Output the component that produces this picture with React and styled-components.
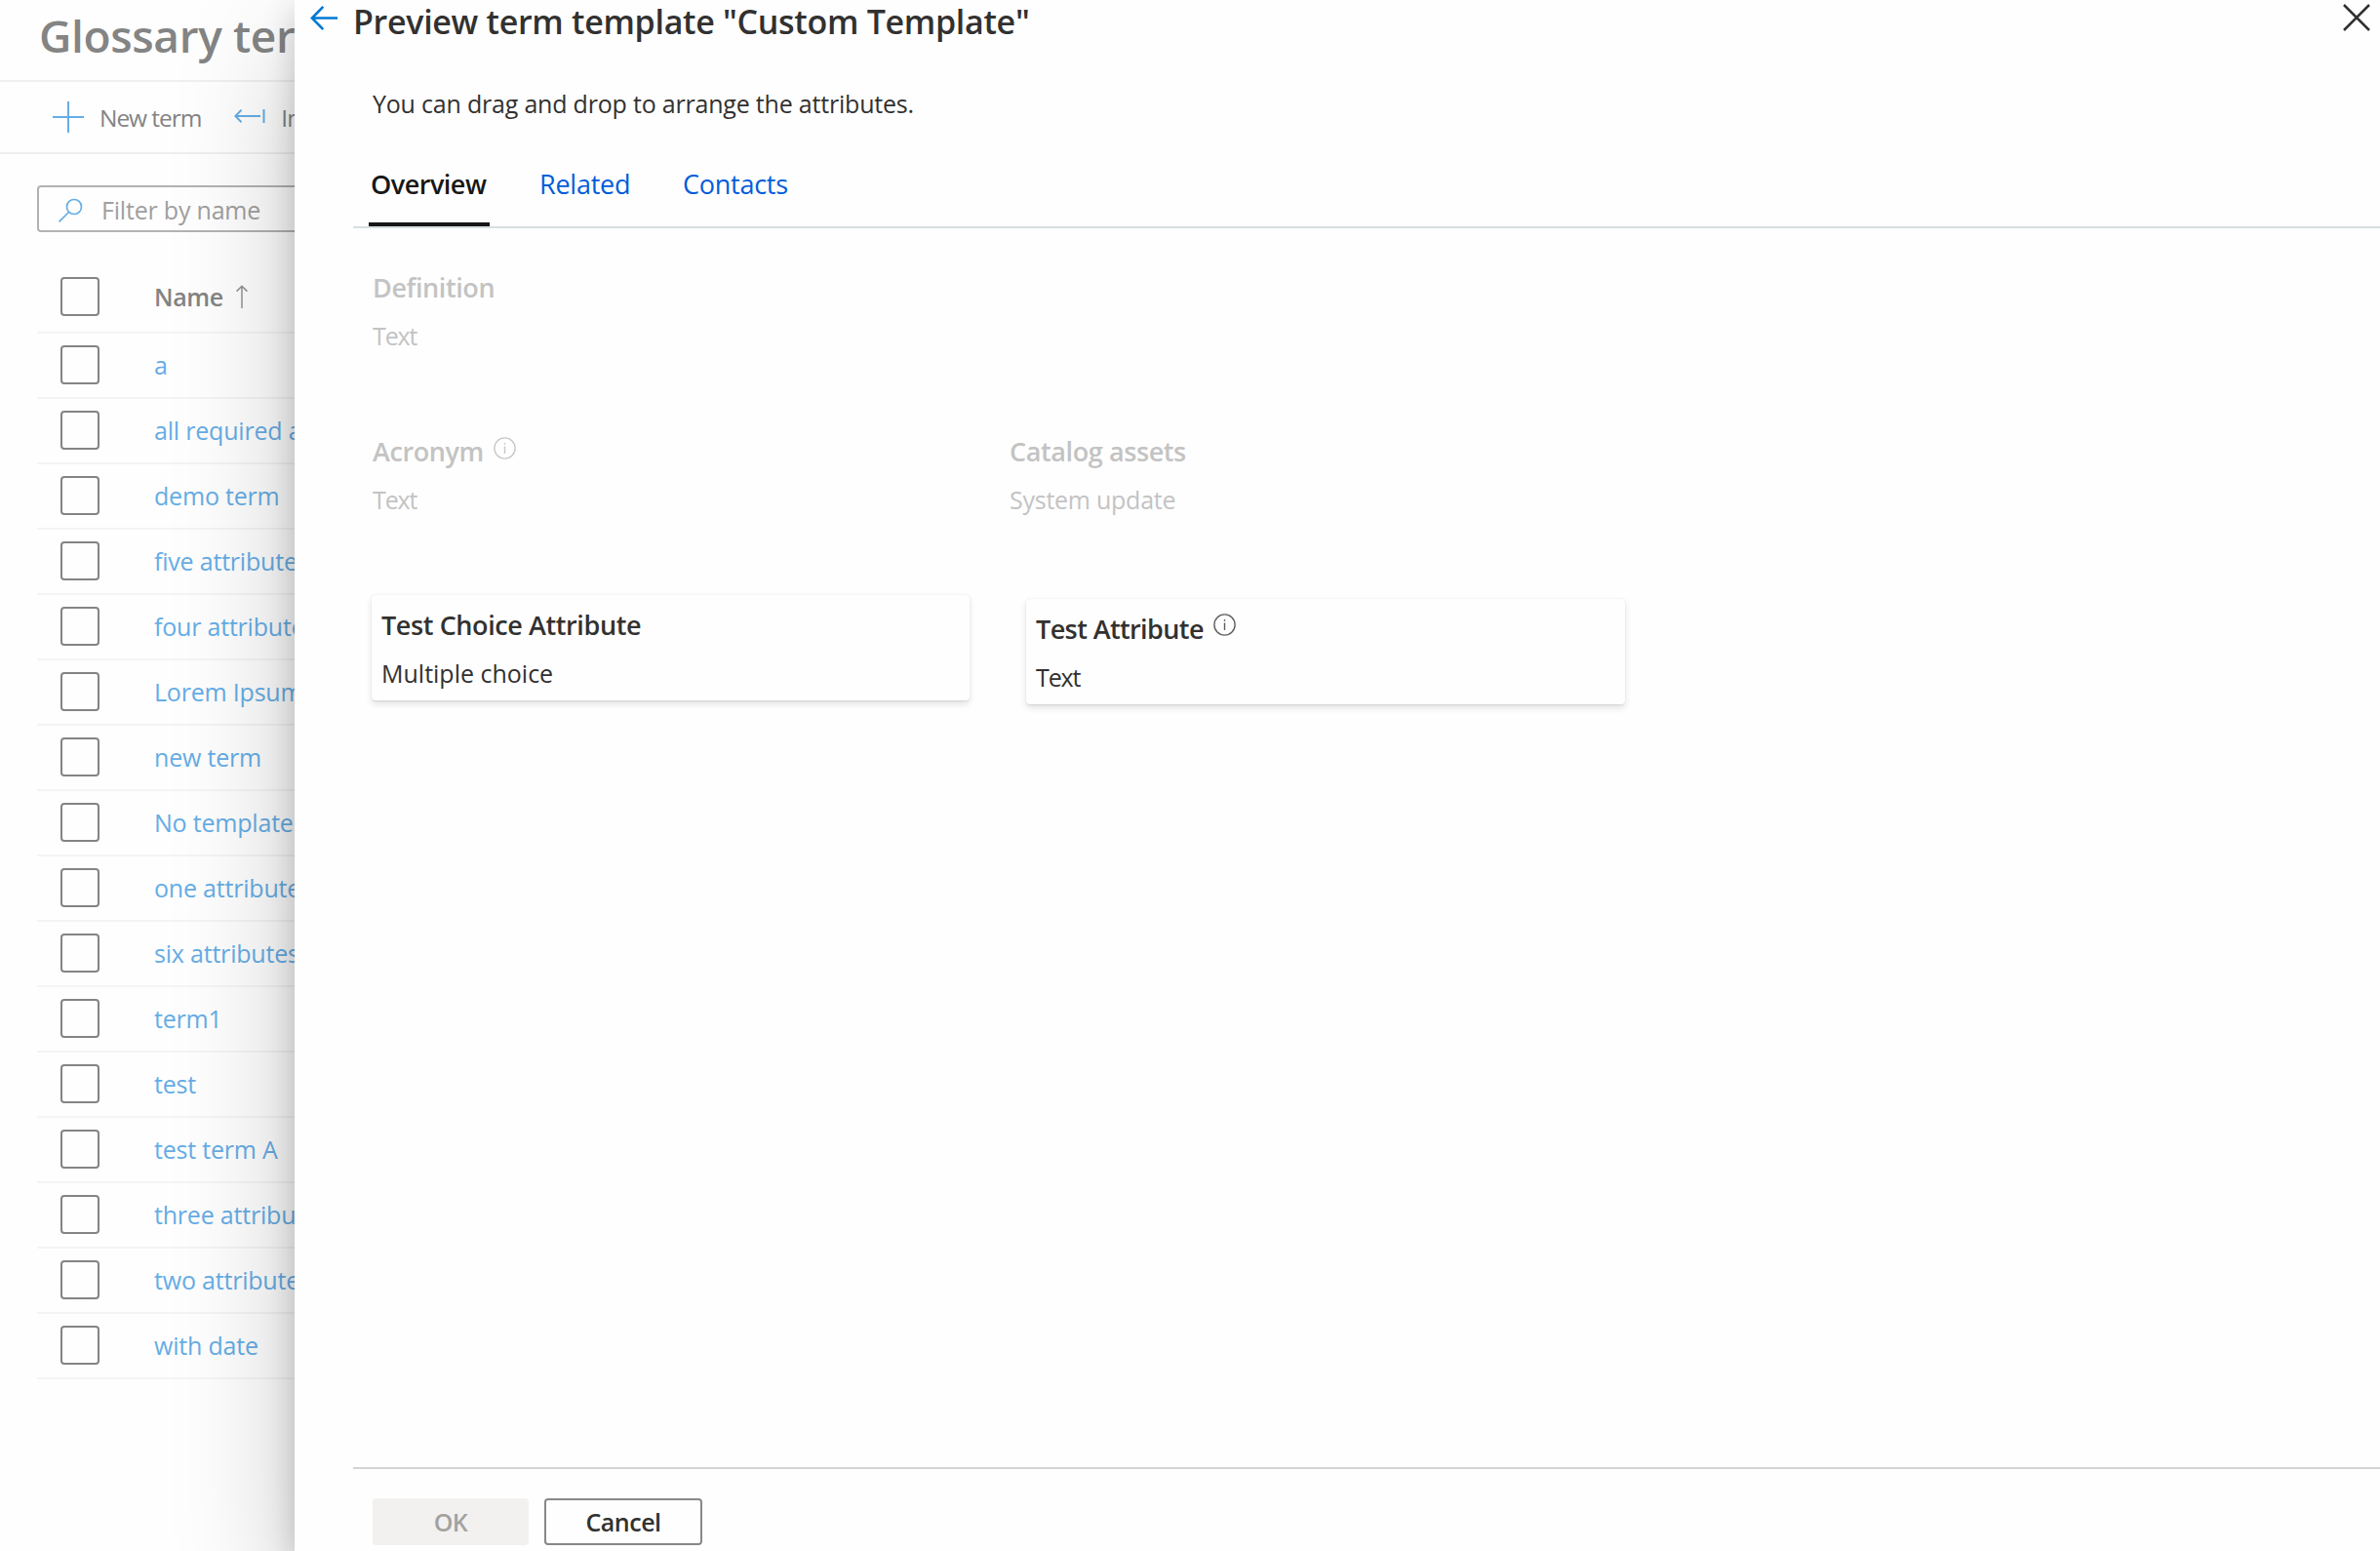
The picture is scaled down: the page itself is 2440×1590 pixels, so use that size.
import React from "react";
import styled, { createGlobalStyle } from "styled-components";

const GlobalStyle = createGlobalStyle`
  * { box-sizing: border-box; }
  html, body { margin: 0; padding: 0; background: #fefefe; overflow: hidden; }
  body { font-family: "Open Sans", "Noto Sans", sans-serif; font-size: 25px; line-height: 34px; color: #323130; }
  svg { display: block; flex: none; }
  button, input { font: inherit; letter-spacing: inherit; }
`;

const Shell = styled.div`
  position: relative;
  width: 2440px;
  height: 1590px;
  overflow: hidden;
  background: #fefefe;
  white-space: nowrap;
`;

/* Glossary page, dimmed behind the panel */
const Page = styled.main`
  display: flex;
  flex-direction: column;
  color: #848484;
`;

const PageHeader = styled.header`
  height: 84px;
  padding: 6px 0 0 40px;
  border-bottom: 2px solid #efefef;
`;

const PageTitle = styled.h1`
  margin: 0;
  font-size: 46px;
  line-height: 60px;
  font-weight: 600;
  letter-spacing: -0.35px;
`;

const Toolbar = styled.div`
  display: flex;
  align-items: center;
  height: 74px;
  padding-left: 54px;
  border-bottom: 2px solid #efefef;
`;

const Command = styled.div`
  display: flex;
  align-items: center;
  gap: 16px;
  margin-right: 34px;
  font-size: 24.5px;
  letter-spacing: -1.05px;
`;

const CommandLabel = styled.span`
  padding-top: 2px;
`;

const FilterBox = styled.div`
  display: flex;
  align-items: center;
  gap: 18px;
  width: 560px;
  height: 48px;
  margin: 32px 0 30px 38px;
  padding: 1px 20px 0;
  border: 2px solid #b2b2b2;
  border-radius: 4px;
  color: #9f9f9f;
  letter-spacing: -0.2px;
`;

const Table = styled.div`
  display: flex;
  flex-direction: column;
  margin-left: 38px;
`;

const Row = styled.div`
  display: flex;
  align-items: center;
  height: ${(p) => (p.$head ? 74 : 67)}px;
  padding: 0 0 ${(p) => (p.$head ? 0 : 1)}px 24px;
  border-bottom: 2px solid #f4f4f4;
`;

const Checkbox = styled.span`
  width: 40px;
  height: 40px;
  margin-right: 56px;
  border: 2px solid #848484;
  border-radius: 4px;
  flex: none;
`;

const ColumnName = styled.span`
  margin-right: 13px;
  font-weight: 600;
  letter-spacing: -0.4px;
`;

const TermLink = styled.a`
  color: #66ade5;
  letter-spacing: -0.2px;
`;

/* Template preview panel, laid over the page */
const Panel = styled.section`
  position: absolute;
  top: 0;
  right: 0;
  bottom: 0;
  left: 302px;
  display: flex;
  flex-direction: column;
  background: #fefefe;
  box-shadow: 0 51.2px 115.2px rgba(0, 0, 0, 0.22), 0 9.6px 28.8px rgba(0, 0, 0, 0.18);
`;

const PanelHeader = styled.header`
  display: flex;
  align-items: flex-start;
  height: 89px;
  padding: 0 10px 0 16px;
`;

const PanelTitle = styled.h2`
  flex: 1;
  margin: 0 0 0 16px;
  font-size: 34px;
  line-height: 44px;
  font-weight: 600;
  letter-spacing: -0.3px;
`;

const IconButton = styled.button`
  display: block;
  margin-top: ${(p) => p.$top}px;
  padding: 0;
  border: 0;
  background: none;
`;

const PanelBody = styled.div`
  display: flex;
  flex-direction: column;
  flex: 1;
  margin-left: 60px;
`;

const Hint = styled.p`
  margin: 0;
  padding-left: 20px;
  letter-spacing: -0.2px;
`;

const TabList = styled.div`
  display: flex;
  height: 111px;
  padding: 48px 0 0 16px;
  border-bottom: 2px solid #d9dde0;
`;

const Tab = styled.div`
  width: ${(p) => p.$width}px;
  height: 61px;
  margin-right: ${(p) => p.$gap || 0}px;
  padding-left: 2px;
  font-size: 27px;
  line-height: 36px;
  font-weight: ${(p) => (p.$active ? 600 : 400)};
  letter-spacing: ${(p) => (p.$active ? "-0.5px" : "-0.25px")};
  color: ${(p) => (p.$active ? "#171717" : "#015cda")};
  border-bottom: 4px solid ${(p) => (p.$active ? "#171717" : "transparent")};
`;

const Attributes = styled.div`
  display: flex;
  flex-direction: column;
  padding: 43px 0 0 19px;
`;

const FieldRow = styled.div`
  display: flex;
  height: 168px;
`;

const Field = styled.div`
  width: 653px;
  padding-left: 1px;
  color: #c3c3c3;
`;

const CardRow = styled.div`
  display: flex;
  align-items: flex-start;
  gap: 58px;
  margin-top: -3px;
`;

const Card = styled.div`
  width: ${(p) => p.$width}px;
  height: 108px;
  margin-top: ${(p) => p.$drop || 0}px;
  padding: 13px 10px 11px;
  border-radius: 4px;
  background: #fefefe;
  box-shadow: 0 3.2px 7.2px rgba(0, 0, 0, 0.11), 0 0.6px 1.8px rgba(0, 0, 0, 0.09);
`;

const AttributeName = styled.div`
  display: flex;
  gap: 10px;
  margin-bottom: 14px;
  font-size: 27px;
  line-height: 36px;
  font-weight: 600;
  letter-spacing: ${(p) => p.$spacing || "-0.4px"};

  svg { margin-top: ${(p) => p.$iconTop || 3}px; }
`;

const AttributeType = styled.div`
  letter-spacing: ${(p) => p.$spacing || "0"};
`;

const PanelFooter = styled.footer`
  display: flex;
  gap: 16px;
  height: 86px;
  margin-left: 60px;
  padding: 30px 0 0 20px;
  border-top: 2px solid #d3d3d3;
`;

const FooterButton = styled.button`
  width: ${(p) => (p.$disabled ? 160 : 162)}px;
  height: 48px;
  padding: 0;
  line-height: 42px;
  font-weight: 600;
  letter-spacing: -0.5px;
  border: 2px solid ${(p) => (p.$disabled ? "#f2f1f0" : "#8a8886")};
  border-radius: 4px;
  background: ${(p) => (p.$disabled ? "#f2f1f0" : "#fefefe")};
  color: ${(p) => (p.$disabled ? "#a3a19f" : "#323130")};
`;

const PlusIcon = () => (
  <svg width="32" height="32" viewBox="0 0 32 32" stroke="#66ade5" strokeWidth="2">
    <path d="M16 0v32M0 16h32" />
  </svg>
);

const ImportIcon = () => (
  <svg width="32" height="16" viewBox="0 0 32 16" fill="none" stroke="#66ade5" strokeWidth="2">
    <path d="M27 7H1.500M7.500 .8L1.300 7l6.200 6.200M30.500 0v14" />
  </svg>
);

const SearchIcon = () => (
  <svg width="26" height="26" viewBox="0 0 26 26" fill="none" stroke="#66ade5" strokeWidth="1.700">
    <circle cx="16" cy="10" r="7.500" />
    <path d="M10.500 15.500L.6 25.400" />
  </svg>
);

const SortIcon = () => (
  <svg width="12" height="24" viewBox="0 0 12 24" fill="none" stroke="#929292" strokeWidth="1.500">
    <path d="M6 24V1M.6 6.600L6 1.200l5.400 5.400" />
  </svg>
);

const BackIcon = () => (
  <svg width="28" height="26" viewBox="0 0 28 26" fill="none" stroke="#0078d4" strokeWidth="2.600">
    <path d="M28 12.500H2M13.300 .9L1.900 12.500l11.400 11.600" />
  </svg>
);

const CloseIcon = () => (
  <svg width="28" height="28" viewBox="0 0 28 28" stroke="#323130" strokeWidth="2.500">
    <path d="M1 1l26 26M27 1L1 27" />
  </svg>
);

const InfoIcon = ({ color }) => (
  <svg width="23" height="23" viewBox="0 0 23 23" fill="none" stroke={color} strokeWidth="1.400">
    <circle cx="11.500" cy="11.500" r="10.600" />
    <path d="M11.500 9.500v7.500M11.500 6v1.800" />
  </svg>
);

const terms = [
  "a",
  "all required attributes",
  "demo term",
  "five attributes",
  "four attributes",
  "Lorem Ipsum",
  "new term",
  "No template",
  "one attribute",
  "six attributes",
  "term1",
  "test",
  "test term A",
  "three attributes",
  "two attributes",
  "with date",
];

export default function App() {
  return (
    <>
      <GlobalStyle />
      <Shell>
        <Page>
          <PageHeader>
            <PageTitle>Glossary terms</PageTitle>
          </PageHeader>
          <Toolbar>
            <Command><PlusIcon /><CommandLabel>New term</CommandLabel></Command>
            <Command><ImportIcon /><CommandLabel>Import terms</CommandLabel></Command>
          </Toolbar>
          <FilterBox><SearchIcon />Filter by name</FilterBox>
          <Table>
            <Row $head>
              <Checkbox />
              <ColumnName>Name</ColumnName>
              <SortIcon />
            </Row>
            {terms.map((term) => (
              <Row key={term}>
                <Checkbox />
                <TermLink>{term}</TermLink>
              </Row>
            ))}
          </Table>
        </Page>

        <Panel>
          <PanelHeader>
            <IconButton $top={6} aria-label="Back"><BackIcon /></IconButton>
            <PanelTitle>Preview term template "Custom Template"</PanelTitle>
            <IconButton $top={4} aria-label="Close"><CloseIcon /></IconButton>
          </PanelHeader>
          <PanelBody>
            <Hint>You can drag and drop to arrange the attributes.</Hint>
            <TabList>
              <Tab $active $width={124} $gap={49}>Overview</Tab>
              <Tab $width={96} $gap={51}>Related</Tab>
              <Tab $width={112}>Contacts</Tab>
            </TabList>
            <Attributes>
              <FieldRow>
                <Field>
                  <AttributeName>Definition</AttributeName>
                  <AttributeType $spacing="-1.1px">Text</AttributeType>
                </Field>
              </FieldRow>
              <FieldRow>
                <Field>
                  <AttributeName>Acronym <InfoIcon color="#c8c8c8" /></AttributeName>
                  <AttributeType $spacing="-1.1px">Text</AttributeType>
                </Field>
                <Field>
                  <AttributeName>Catalog assets</AttributeName>
                  <AttributeType $spacing="-0.25px">System update</AttributeType>
                </Field>
              </FieldRow>
              <CardRow>
                <Card $width={613}>
                  <AttributeName>Test Choice Attribute</AttributeName>
                  <AttributeType>Multiple choice</AttributeType>
                </Card>
                <Card $width={614} $drop={4}>
                  <AttributeName $spacing="-0.6px" $iconTop={2}>Test Attribute <InfoIcon color="#5f5e5d" /></AttributeName>
                  <AttributeType $spacing="-1.1px">Text</AttributeType>
                </Card>
              </CardRow>
            </Attributes>
          </PanelBody>
          <PanelFooter>
            <FooterButton $disabled>OK</FooterButton>
            <FooterButton>Cancel</FooterButton>
          </PanelFooter>
        </Panel>
      </Shell>
    </>
  );
}
